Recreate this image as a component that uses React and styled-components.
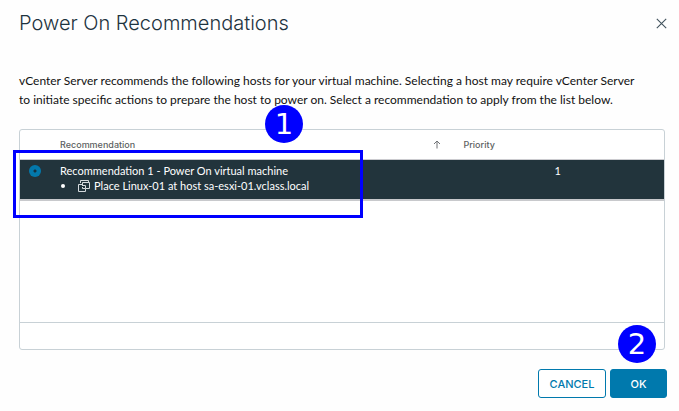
import React from "react";
import styled, { createGlobalStyle } from "styled-components";

const Global = createGlobalStyle`
  *, *::before, *::after { box-sizing: border-box; }
  body {
    margin: 0;
    background: #fefefe;
    color: #1b1b1b;
    font-family: Inter, "Open Sans", sans-serif;
    font-size: 11px;
  }
`;

const Dialog = styled.section`
  display: flex;
  flex-direction: column;
  padding: 11px 12px 12px 19px;
`;

const Header = styled.header`
  display: flex;
  align-items: center;
  justify-content: space-between;
`;

const Title = styled.h1`
  margin: 0;
  font-size: 20px;
  font-weight: 300;
  line-height: 24px;
  color: #1d3340;
`;

const CloseButton = styled.button`
  display: flex;
  margin: 1px 0 0;
  padding: 0;
  border: 0;
  background: none;
  color: #42535e;
  cursor: pointer;
`;

const Intro = styled.p`
  margin: 36px 0 20px;
  padding-right: 24px;
  font-family: Lato, sans-serif;
  font-size: 12px;
  line-height: 19px;
  color: #111;
`;

const GridPanel = styled.div`
  position: relative;
  margin-right: 2px;
  border: 1px solid #c8d1d6;
  border-radius: 3px;
  background: #fff;
`;

const Table = styled.table`
  width: 100%;
  table-layout: fixed;
  border-collapse: separate;
  border-spacing: 0;
`;

const HeadCell = styled.th`
  width: ${(p) => p.$width || "auto"};
  height: 30px;
  padding: 0 10px 0 12px;
  border-bottom: 1px solid #cbcbcf;
  text-align: left;
  font-size: 9px;
  font-weight: 500;
  color: #5c5f62;
`;

const HeadLabel = styled.div`
  display: flex;
  align-items: center;
  justify-content: space-between;
`;

const Cell = styled.td`
  height: 41px;
  padding: ${(p) => (p.$narrow ? "5px 0 0 9px" : "3px 12px 0")};
  border-bottom: 2px solid #c8c9cc;
  background: #22343c;
  color: #fff;
  font-family: Lato, sans-serif;
  font-size: 11px;
  line-height: 15px;
  text-align: ${(p) => (p.$center ? "center" : "left")};
  vertical-align: top;
`;

const Radio = styled.input`
  appearance: none;
  display: block;
  width: 12px;
  height: 12px;
  margin: 0;
  border-radius: 50%;
  background: radial-gradient(circle, #14303f 0 1px, #0378ab 2px);
`;

const Actions = styled.ul`
  margin: 0;
  padding: 0;
  list-style: none;
`;

const Action = styled.li`
  display: flex;
  align-items: center;
  &::before {
    content: "";
    width: 4px;
    height: 4px;
    margin: 0 13px 0 1px;
    border-radius: 50%;
    background: #fff;
  }
  svg { margin-right: 4px; }
`;

const EmptyArea = styled.div`
  min-height: 121px;
`;

const GridFooter = styled.div`
  height: 27px;
  border-top: 1px solid #c8d1d6;
`;

const Footer = styled.footer`
  display: flex;
  justify-content: flex-end;
  gap: 4px;
  margin-top: 19px;
`;

const Button = styled.button`
  position: relative;
  min-width: ${(p) => (p.$primary ? "57px" : "68px")};
  height: 29px;
  padding: 0 9px;
  border: 1px solid #0079ad;
  border-radius: 3px;
  background: ${(p) => (p.$primary ? "#0079ad" : "#fff")};
  color: ${(p) => (p.$primary ? "#fff" : "#0079ad")};
  font: 500 11px Inter, sans-serif;
  cursor: pointer;
`;

const Highlight = styled.div`
  position: absolute;
  top: 20px;
  left: -7px;
  width: 350px;
  height: 68px;
  border: 3px solid #0000ff;
  pointer-events: none;
`;

const StepBadge = styled.span`
  position: absolute;
  top: ${(p) => p.$top};
  left: ${(p) => p.$left};
  width: 38px;
  height: 38px;
  border-radius: 50%;
  background: #0000ff;
  color: #fff;
  font: 29px/38px "DejaVu Sans", sans-serif;
  text-align: center;
  pointer-events: none;
`;

function CloseIcon() {
  return (
    <svg width="11" height="11" viewBox="0 0 11 11" stroke="currentColor" strokeWidth="1.1" aria-hidden="true">
      <path d="M.8.8l9.4 9.4M10.2.8L.8 10.2" />
    </svg>
  );
}

function SortIcon() {
  return (
    <svg width="8" height="9" viewBox="0 0 8 9" fill="none" stroke="#707376" aria-hidden="true">
      <path d="M4 8.5V1M1 4l3-3 3 3" />
    </svg>
  );
}

function VmIcon() {
  return (
    <svg width="12" height="12" viewBox="0 0 12 12" fill="none" stroke="#d5dadd" aria-hidden="true">
      <path d="M2.5 3V.5h8v2" />
      <path d="M4.5 6V2.5h7v6H8" />
      <path d="M4 4.5H.5v7h7v-3" />
      <path d="M5 5.5h2.5v3H4.5V7" />
    </svg>
  );
}

export default function App() {
  return (
    <>
      <Global />
      <Dialog role="dialog" aria-labelledby="dialog-title">
        <Header>
          <Title id="dialog-title">Power On Recommendations</Title>
          <CloseButton aria-label="Close">
            <CloseIcon />
          </CloseButton>
        </Header>
        <Intro>
          vCenter Server recommends the following hosts for your virtual machine. Selecting a host may require vCenter
          Server to initiate specific actions to prepare the host to power on. Select a recommendation to apply from the
          list below.
        </Intro>
        <GridPanel>
          <Table>
            <thead>
              <tr>
                <HeadCell $width="28px" aria-label="Selection" />
                <HeadCell scope="col" aria-sort="ascending">
                  <HeadLabel>
                    Recommendation
                    <SortIcon />
                  </HeadLabel>
                </HeadCell>
                <HeadCell scope="col" $width="33%">Priority</HeadCell>
              </tr>
            </thead>
            <tbody>
              <tr>
                <Cell $narrow>
                  <Radio type="radio" name="recommendation" id="rec-1" defaultChecked />
                </Cell>
                <Cell>
                  <label htmlFor="rec-1">Recommendation 1 - Power On virtual machine</label>
                  <Actions>
                    <Action>
                      <VmIcon />
                      Place Linux-01 at host sa-esxi-01.vclass.local
                    </Action>
                  </Actions>
                </Cell>
                <Cell $center>1</Cell>
              </tr>
            </tbody>
          </Table>
          <EmptyArea />
          <GridFooter />
          <Highlight />
          <StepBadge $top="-25px" $left="245px">1</StepBadge>
        </GridPanel>
        <Footer>
          <Button>CANCEL</Button>
          <Button $primary>
            OK
            <StepBadge $top="-45px" $left="7px">2</StepBadge>
          </Button>
        </Footer>
      </Dialog>
    </>
  );
}
